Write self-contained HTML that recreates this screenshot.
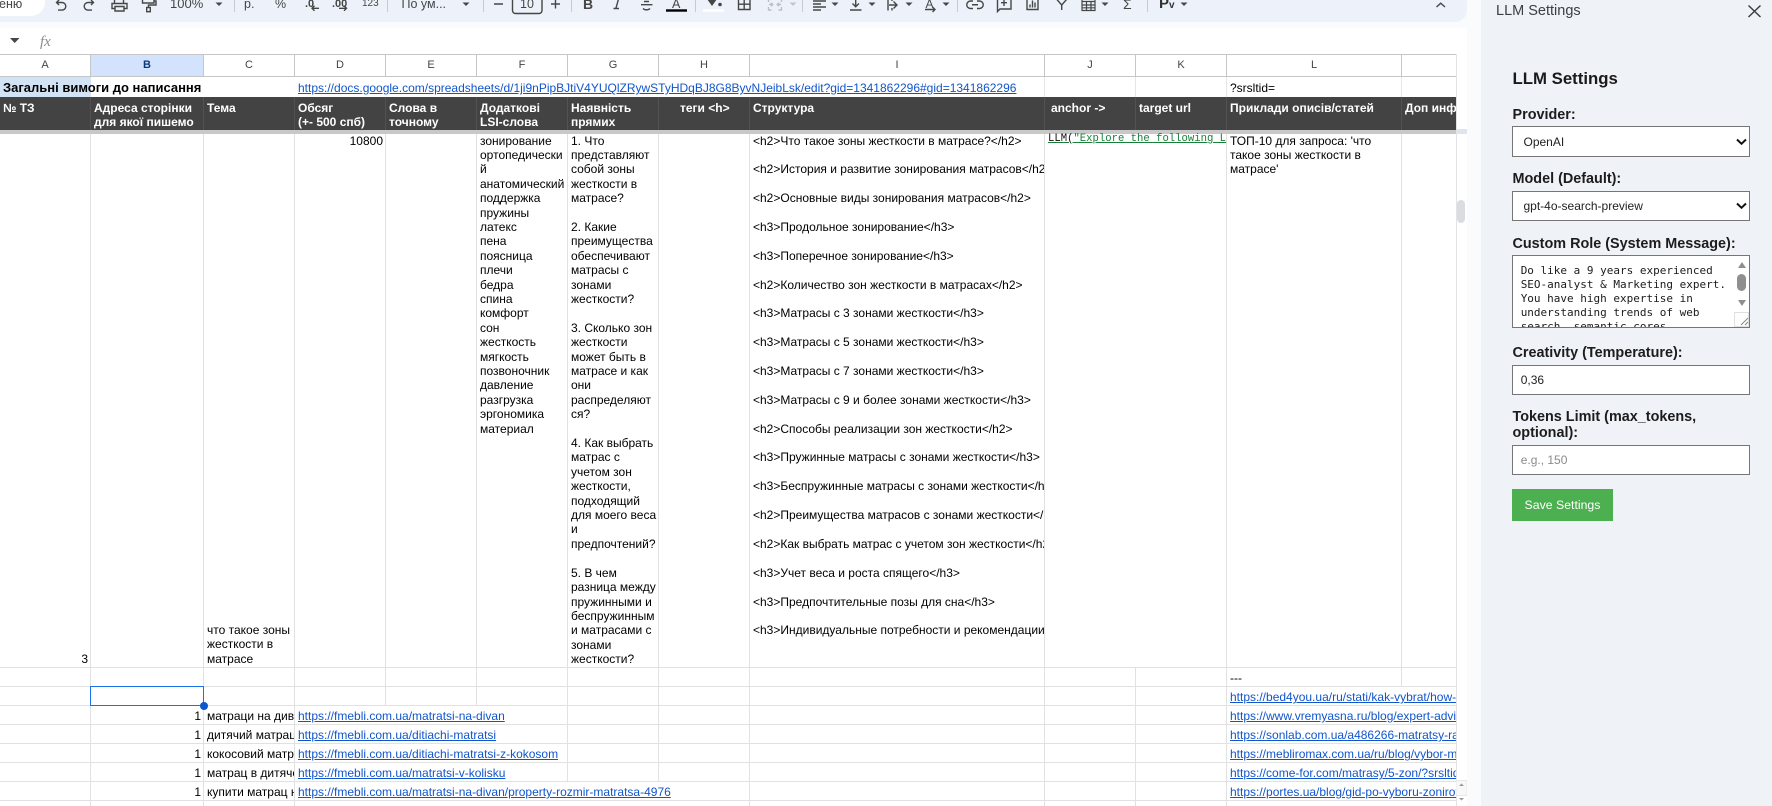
<!DOCTYPE html>
<html lang="uk">
<head>
<meta charset="utf-8">
<title>LLM Settings</title>
<style>
html,body{margin:0;padding:0;width:1772px;height:806px;overflow:hidden;background:#f9fbfd;font-family:"Liberation Sans","Noto Sans CJK SC",sans-serif;color:#000}
.a{position:absolute}
.t{position:absolute;white-space:nowrap;font-size:12px;line-height:14.4px;color:#000}
.clip{overflow:hidden}
.h{position:absolute;top:101px;color:#fff;font-weight:700;font-size:12px;line-height:14.4px;white-space:nowrap}
.c{position:absolute;top:58px;height:15px;line-height:15px;font-size:11px;color:#444;text-align:center}
.l{color:#1155cc;text-decoration:underline}
.lab{position:absolute;left:1512.5px;font-weight:700;font-size:14.4px;line-height:16px;color:#1c1c1c;white-space:nowrap}
.box{position:absolute;left:1512px;width:236px;background:#fff;border:1px solid #767676}
.v{position:absolute;left:1523.5px;font-size:12px;line-height:16px;color:#222;white-space:nowrap}
.tb{position:absolute;top:-3px;font-size:12px;line-height:14px;color:#444746;white-space:nowrap;text-align:center}
.m{position:absolute;left:1520.7px;font-family:"DejaVu Sans Mono","Liberation Mono",monospace;font-size:11px;line-height:14px;color:#1b1b1b;white-space:nowrap}
</style>
</head>
<body>
<!-- toolbar background -->
<div class="a" style="left:0;top:-20px;width:1467px;height:42px;background:#edf2fa;border-bottom-right-radius:12px"></div>
<div class="a" style="left:-20px;top:-20px;width:65px;height:36px;background:#fff;border-radius:14px"></div>
<div class="t" style="left:-1px;top:-3px;font-size:12.5px;color:#444746">еню</div>

<!-- toolbar texts -->
<div class="tb" style="left:170px;font-size:13px">100%</div>
<div class="tb" style="left:244px;font-size:12.5px">р.</div>
<div class="tb" style="left:275px;font-size:12.5px">%</div>
<div class="tb" style="left:305px;font-size:11px;font-weight:700">.0</div>
<div class="tb" style="left:332px;font-size:11px;font-weight:700">.00</div>
<div class="tb" style="left:362px;font-size:10px">123</div>
<div class="tb" style="left:401.5px;font-size:12.5px">По ум...</div>
<div class="tb" style="left:517px;width:20px;font-size:12.5px">10</div>
<div class="tb" style="left:583px;font-size:14px;font-weight:700">B</div>
<div class="tb" style="left:672px;font-size:12.5px">A</div>
<div class="tb" style="left:925.5px;font-size:12px">A</div>
<div class="tb" style="left:1123px;font-size:14px">Σ</div>
<div class="tb" style="left:1159px;font-size:15px;font-weight:700;color:#333">P<span style="font-size:10px">v</span></div>

<!-- toolbar icons -->
<svg class="a" style="left:0;top:0" width="1467" height="22" viewBox="0 0 1467 22" fill="none" stroke="#444746" stroke-width="1.4">
<path d="M59 0L56.5 2.5L59 5M57 2.5H62a3.8 3.8 0 0 1 0 7.6H58"/>
<path d="M91 0L93.5 2.5L91 5M93 2.5H88a3.8 3.8 0 0 0 0 7.6H92"/>
<path d="M114.5 3V-1H123.5V3M115 8.5h-3V3.5h15v5h-3M115 6.5h9v4.5h-9z"/>
<path d="M142.5-2h11.5v5h-11.5zM154 1h2v4h-7.5v3"/><rect x="146.7" y="7.5" width="3.6" height="4.2"/>
<g fill="#444746" stroke="none">
<path d="M215.500 2.500h7l-3.500 3.500z"/><path d="M462.500 2.500h7l-3.500 3.500z"/><path d="M831.500 2.500h7l-3.500 3.500z"/>
<path d="M868.500 2.500h7l-3.500 3.500z"/><path d="M905.500 2.500h7l-3.500 3.500z"/><path d="M942.500 2.500h7l-3.500 3.500z"/>
<path d="M1101.500 2.500h7l-3.500 3.500z"/><path d="M1180.500 2.500h7l-3.500 3.500z"/>
<path d="M707 -1L712 6L717 -1z"/><circle cx="720" cy="4.500" r="1.800"/>
<path d="M789.500 2.500h7l-3.500 3.500z" fill="#c4c7c9"/>
<rect x="666" y="9.300" width="21" height="2.400" fill="#000"/>
<rect x="703" y="9.300" width="21" height="2.400" fill="#fff"/>
</g>
<g stroke="#c7cbd1" stroke-width="1">
<path d="M234.500 0v12M387.500 0v12M483.500 0v12M571.500 0v12M695.500 0v12M802.500 0v12M957.500 0v12M1147.500 0v12"/>
</g>
<path d="M319 8.300h-7M314.500 5.800l-2.500 2.500 2.500 2.500"/>
<path d="M339 8.300h7.500M344 5.800l2.500 2.500-2.500 2.500"/>
<rect x="512.500" y="-6" width="29.500" height="19.500" rx="3"/>
<path d="M494 4h9M551 4h9M555.500-.5v9"/>
<path d="M615-1h6M618.500-1l-2.500 9M613.500 8.500h5.500"/>
<path d="M641 4.700h11.500M643 8.500a4.200 3 0 0 0 7 0M644 1.500h5"/>
<path d="M738.500-1h11.500v10.500H738.500zM744.200-1v10.500M738.500 4.200h11.500"/>
<path d="M768.500-.5v2.500M768.500 7v3h3M781.500-.5v2.500M781.500 7v3h-3M769 4.500h3.500M771 2.800l1.800 1.700-1.800 1.700M781 4.500h-3.500M779 2.800l-1.800 1.700 1.800 1.700" stroke="#bcc0c4"/>
<path d="M813 1h13M813 4h8M813 7h13M813 10h8"/>
<path d="M855.700-1v7M852.500 3.500l3.200 3.200 3.200-3.200M850 10h11.500"/>
<path d="M888-1v11.500M892-1v2M892 8v2.500M889 5h8M893.500 1.500L897 5l-3.500 3.500"/>
<path d="M925 9.500h10M932.500 7l2.500 2.500-2.500 2.500"/>
<path d="M973 1h-2.500a3.700 3.700 0 0 0 0 7.500H973M977 1h2.500a3.700 3.700 0 0 1 0 7.500H977M972 4.750h6"/>
<path d="M997.500-2v13.500l2.500-2.500h11V-2M1004-.5v6.500M1001 2.700h6"/>
<path d="M1027-1v10.500h11V-1M1030 7.500v-3M1032.500 7.500v-7M1035 7.500v-5"/>
<path d="M1056.500-1L1061.700 5v5M1067-1L1061.700 5"/>
<path d="M1082-1v11.500h13V-1M1082 1.500h13M1082 5h13M1082 7.800h13M1086.500 1.500v9M1091 1.500v9" stroke-width="1.200"/>
<path d="M1436.500 7L1440.700 3.200 1445 7"/>
</svg>

<!-- formula bar -->
<div class="a" style="left:0;top:28px;width:1467px;height:26px;background:#fff"></div>
<svg class="a" style="left:10px;top:38px" width="10" height="6"><path d="M0 0h9.500L4.700 5z" fill="#444746"/></svg>
<div class="t" style="left:40px;top:34px;font-family:'Liberation Serif',serif;font-style:italic;font-size:15px;line-height:16px;color:#8a8d90">fx</div>

<!-- grid white area -->
<div class="a" style="left:0;top:54px;width:1467px;height:752px;background:#fff"></div>
<!-- active col header + A1 fill -->
<div class="a" style="left:91px;top:55px;width:112px;height:21px;background:#d3e3fd"></div>
<div class="a" style="left:0;top:77px;width:91px;height:20px;background:#d3e3f6"></div>

<!-- col letters -->
<div class="c" style="left:0;width:90px">A</div>
<div class="c" style="left:91px;width:112px;font-weight:700;color:#0b3a7a">B</div>
<div class="c" style="left:204px;width:90px">C</div>
<div class="c" style="left:295px;width:90px">D</div>
<div class="c" style="left:386px;width:90px">E</div>
<div class="c" style="left:477px;width:90px">F</div>
<div class="c" style="left:568px;width:90px">G</div>
<div class="c" style="left:659px;width:90px">H</div>
<div class="c" style="left:750px;width:294px">I</div>
<div class="c" style="left:1045px;width:90px">J</div>
<div class="c" style="left:1136px;width:90px">K</div>
<div class="c" style="left:1227px;width:174px">L</div>

<!-- dark header + freeze bar -->
<div class="a" style="left:0;top:97px;width:1456px;height:33px;background:#434343"></div>
<div class="a" style="left:0;top:130px;width:1456px;height:4px;background:#c8c8c8"></div>
<div class="a" style="left:1456px;top:129px;width:11px;height:5px;background:#dde5f0"></div>

<!-- lines -->
<svg class="a" style="left:0;top:0" width="1472" height="806" shape-rendering="crispEdges" fill="none">
<g stroke="#c6c6c6">
<path d="M0 54.500H1456M0 76.500H1456"/>
<path d="M90.500 54v22M203.500 54v22M294.500 54v22M385.500 54v22M476.500 54v22M567.500 54v22M658.500 54v22M749.500 54v22M1044.500 54v22M1135.500 54v22M1226.500 54v22M1401.500 54v22"/>
</g>
<g stroke="#e6e6e6">
<path d="M1044.500 77v20M1135.500 77v20M1226.500 77v20M1401.500 77v20"/>
</g>
<g stroke="#525252">
<path d="M90.500 97v33M203.500 97v33M294.500 97v33M385.500 97v33M476.500 97v33M567.500 97v33M658.500 97v33M749.500 97v33M1044.500 97v33M1135.500 97v33M1226.500 97v33M1401.500 97v33"/>
</g>
<g stroke="#e1e1e1">
<path d="M0 667.500H1456M0 686.500H1456M0 705.500H1456M0 724.500H1456M0 743.500H1456M0 762.500H1456M0 781.500H1456M0 800.500H1456"/>
<path d="M90.500 134V806M203.500 134V806M294.500 134V806M385.500 134V705M476.500 134V705M567.500 134V781M658.500 134V781M749.500 134V806M1044.500 134V806M1135.500 667V806M1226.500 134V806M1401.500 134V686"/>
</g>
<path d="M1456.500 54V806" stroke="#e3e3e3"/>
</svg>

<!-- row 1 -->
<div class="t" style="left:3px;top:80.500px;font-size:13px;font-weight:700">Загальні вимоги до написання</div>
<div class="t l" style="left:298px;top:81px">https://docs.google.com/spreadsheets/d/1ji9nPipBJtiV4YUQlZRywSTyHDqBJ8G8ByvNJeibLsk/edit?gid=1341862296#gid=1341862296</div>
<div class="t" style="left:1230px;top:81px">?srsltid=</div>

<!-- dark header labels -->
<div class="h" style="left:3px">№ ТЗ</div>
<div class="h" style="left:94px">Адреса сторінки<br>для якої пишемо</div>
<div class="h" style="left:207px">Тема</div>
<div class="h" style="left:298px">Обсяг<br>(+- 500 спб)</div>
<div class="h" style="left:389px">Слова в<br>точному</div>
<div class="h" style="left:480px">Додаткові<br>LSI-слова</div>
<div class="h" style="left:571px">Наявність<br>прямих</div>
<div class="h" style="left:680px">теги &lt;h&gt;</div>
<div class="h" style="left:753px">Структура</div>
<div class="h" style="left:1051px">anchor -&gt;</div>
<div class="h" style="left:1139px">target url</div>
<div class="h" style="left:1230px">Приклади описів/статей</div>
<div class="h clip" style="left:1405px;width:51px">Доп инф</div>

<!-- tall row -->
<div class="t" style="left:302px;width:81px;top:133.500px;text-align:right">10800</div>
<div class="t" style="left:480px;top:133.500px">зонирование<br>ортопедически<br>й<br>анатомический<br>поддержка<br>пружины<br>латекс<br>пена<br>поясница<br>плечи<br>бедра<br>спина<br>комфорт<br>сон<br>жесткость<br>мягкость<br>позвоночник<br>давление<br>разгрузка<br>эргономика<br>материал</div>
<div class="t" style="left:571px;top:133.500px">1. Что<br>представляют<br>собой зоны<br>жесткости в<br>матрасе?<br><br>2. Какие<br>преимущества<br>обеспечивают<br>матрасы с<br>зонами<br>жесткости?<br><br>3. Сколько зон<br>жесткости<br>может быть в<br>матрасе и как<br>они<br>распределяют<br>ся?<br><br>4. Как выбрать<br>матрас с<br>учетом зон<br>жесткости,<br>подходящий<br>для моего веса<br>и<br>предпочтений?<br><br>5. В чем<br>разница между<br>пружинными и<br>беспружинным<br>и матрасами с<br>зонами<br>жесткости?</div>
<div class="t clip" style="left:753px;width:291px;top:133.500px;height:530px">&lt;h2&gt;Что такое зоны жесткости в матрасе?&lt;/h2&gt;<br><br>&lt;h2&gt;История и развитие зонирования матрасов&lt;/h2&gt;<br><br>&lt;h2&gt;Основные виды зонирования матрасов&lt;/h2&gt;<br><br>&lt;h3&gt;Продольное зонирование&lt;/h3&gt;<br><br>&lt;h3&gt;Поперечное зонирование&lt;/h3&gt;<br><br>&lt;h2&gt;Количество зон жесткости в матрасах&lt;/h2&gt;<br><br>&lt;h3&gt;Матрасы с 3 зонами жесткости&lt;/h3&gt;<br><br>&lt;h3&gt;Матрасы с 5 зонами жесткости&lt;/h3&gt;<br><br>&lt;h3&gt;Матрасы с 7 зонами жесткости&lt;/h3&gt;<br><br>&lt;h3&gt;Матрасы с 9 и более зонами жесткости&lt;/h3&gt;<br><br>&lt;h2&gt;Способы реализации зон жесткости&lt;/h2&gt;<br><br>&lt;h3&gt;Пружинные матрасы с зонами жесткости&lt;/h3&gt;<br><br>&lt;h3&gt;Беспружинные матрасы с зонами жесткости&lt;/h3&gt;<br><br>&lt;h2&gt;Преимущества матрасов с зонами жесткости&lt;/h2&gt;<br><br>&lt;h2&gt;Как выбрать матрас с учетом зон жесткости&lt;/h2&gt;<br><br>&lt;h3&gt;Учет веса и роста спящего&lt;/h3&gt;<br><br>&lt;h3&gt;Предпочтительные позы для сна&lt;/h3&gt;<br><br>&lt;h3&gt;Индивидуальные потребности и рекомендации&lt;/h3&gt;</div>
<div class="t clip" style="left:1048px;width:178px;top:132px;font-family:'Liberation Mono',monospace;font-size:10.600px;line-height:14px;text-decoration:underline;color:#188038"><span style="color:#111">LLM(</span>"Explore the following LSI keywords</div>
<div class="t" style="left:1230px;top:133.500px">ТОП-10 для запроса: 'что<br>такое зоны жесткости в<br>матрасе'</div>
<div class="t" style="left:207px;top:623px">что такое зоны<br>жесткости в<br>матрасе</div>
<div class="t" style="left:60px;width:28px;top:652px;text-align:right">3</div>

<!-- selected cell -->
<div class="a" style="left:90px;top:686px;width:112px;height:18px;border:1px solid #1a73e8"></div>
<div class="a" style="left:199.500px;top:701.500px;width:8px;height:8px;border-radius:50%;background:#0b57d0"></div>

<!-- lower rows -->
<div class="t" style="left:1230px;top:671px">---</div>
<div class="t" style="left:150px;width:51px;top:709px;text-align:right">1</div>
<div class="t" style="left:150px;width:51px;top:728px;text-align:right">1</div>
<div class="t" style="left:150px;width:51px;top:747px;text-align:right">1</div>
<div class="t" style="left:150px;width:51px;top:766px;text-align:right">1</div>
<div class="t" style="left:150px;width:51px;top:785px;text-align:right">1</div>
<div class="t clip" style="left:207px;width:87px;top:709px">матраци на диван</div>
<div class="t clip" style="left:207px;width:87px;top:728px">дитячий матрац</div>
<div class="t clip" style="left:207px;width:87px;top:747px">кокосовий матрац</div>
<div class="t clip" style="left:207px;width:87px;top:766px">матрац в дитячеу</div>
<div class="t clip" style="left:207px;width:87px;top:785px">купити матрац на</div>
<div class="t l" style="left:298px;top:709px">https://fmebli.com.ua/matratsi-na-divan</div>
<div class="t l" style="left:298px;top:728px">https://fmebli.com.ua/ditiachi-matratsi</div>
<div class="t l" style="left:298px;top:747px">https://fmebli.com.ua/ditiachi-matratsi-z-kokosom</div>
<div class="t l" style="left:298px;top:766px">https://fmebli.com.ua/matratsi-v-kolisku</div>
<div class="t l" style="left:298px;top:785px">https://fmebli.com.ua/matratsi-na-divan/property-rozmir-matratsa-4976</div>
<div class="t l clip" style="left:1230px;width:226px;top:690px">https://bed4you.ua/ru/stati/kak-vybrat/how-to-choose</div>
<div class="t l clip" style="left:1230px;width:226px;top:709px">https://www.vremyasna.ru/blog/expert-advice/zony</div>
<div class="t l clip" style="left:1230px;width:226px;top:728px">https://sonlab.com.ua/a486266-matratsy-raznymi</div>
<div class="t l clip" style="left:1230px;width:226px;top:747px">https://mebliromax.com.ua/ru/blog/vybor-matrasa</div>
<div class="t l clip" style="left:1230px;width:226px;top:766px">https://come-for.com/matrasy/5-zon/?srsltid=AfmBOo</div>
<div class="t l clip" style="left:1230px;width:226px;top:785px">https://portes.ua/blog/gid-po-vyboru-zonirovannogo</div>

<!-- grid scrollbar -->
<div class="a" style="left:1457px;top:200px;width:8px;height:23px;border-radius:4px;background:#dadce0"></div>
<svg class="a" style="left:1456px;top:780px" width="11" height="26"><rect x="0" y="0.500" width="11" height="15" fill="#f8f8f8" stroke="#e8e8e8"/><path d="M3 6h5L5.500 3.500zM3 18h5l-2.500 2.500z" fill="#9a9a9a"/></svg>

<!-- right side panel -->
<div class="a" style="left:1481px;top:0;width:291px;height:806px;background:#eff3f8"></div>
<div class="t" style="left:1496px;top:3px;font-size:14.500px;line-height:16px;color:#3c4043">LLM Settings</div>
<svg class="a" style="left:1746px;top:3px" width="17" height="17" fill="none" stroke="#3c4043" stroke-width="1.500"><path d="M2.500 2.500L14.500 14M14.500 2.500L2.500 14"/></svg>
<div class="t" style="left:1512.500px;top:69.500px;font-size:16.800px;line-height:18px;font-weight:700;color:#1a1a1a">LLM Settings</div>

<div class="lab" style="top:107px">Provider:</div>
<div class="box" style="top:126px;height:29px"></div>
<div class="v" style="top:134px">OpenAI</div>
<svg class="a" style="left:1736px;top:138px" width="11" height="8" fill="none" stroke="#111" stroke-width="2"><path d="M1 1.500L5.500 5.800 10 1.500"/></svg>

<div class="lab" style="top:171px">Model (Default):</div>
<div class="box" style="top:191px;height:28px"></div>
<div class="v" style="top:198px">gpt-4o-search-preview</div>
<svg class="a" style="left:1736px;top:202px" width="11" height="8" fill="none" stroke="#111" stroke-width="2"><path d="M1 1.500L5.500 5.800 10 1.500"/></svg>

<div class="lab" style="top:236px">Custom Role (System Message):</div>
<div class="box clip" style="top:255px;height:71px"></div>
<div class="a clip" style="left:1513px;top:256px;width:222px;height:71px">
<div class="m" style="left:7.700px;top:7.500px">Do like a 9 years experienced<br>SEO-analyst &amp; Marketing expert.<br>You have high expertise in<br>understanding trends of web<br>search, semantic cores</div>
</div>
<svg class="a" style="left:1734px;top:256px" width="15" height="71" fill="none">
<path d="M4 12h8L8 6z" fill="#8f8f8f"/>
<path d="M4 44h8L8 50z" fill="#8f8f8f"/>
<rect x="3" y="18" width="9" height="17" rx="4.500" fill="#8f8f8f"/>
<rect x="0.500" y="56.500" width="14" height="14" fill="#fdfdfd" stroke="#e0e0e0"/>
<path d="M7 69l7-7M11 69l3-3" stroke="#888" stroke-width="1"/>
</svg>

<div class="lab" style="top:345px">Creativity (Temperature):</div>
<div class="box" style="top:365px;height:28px"></div>
<div class="v" style="left:1520.700px;top:371.500px">0,36</div>

<div class="lab" style="top:409px">Tokens Limit (max_tokens,<br>optional):</div>
<div class="box" style="top:445px;height:28px"></div>
<div class="v" style="left:1520.700px;top:451.500px;color:#8a8a8a">e.g., 150</div>

<div class="a" style="left:1512px;top:489px;width:101px;height:32px;background:#4caf50;color:#fff;font-size:12.300px;line-height:32px;text-align:center">Save Settings</div>
</body>
</html>
